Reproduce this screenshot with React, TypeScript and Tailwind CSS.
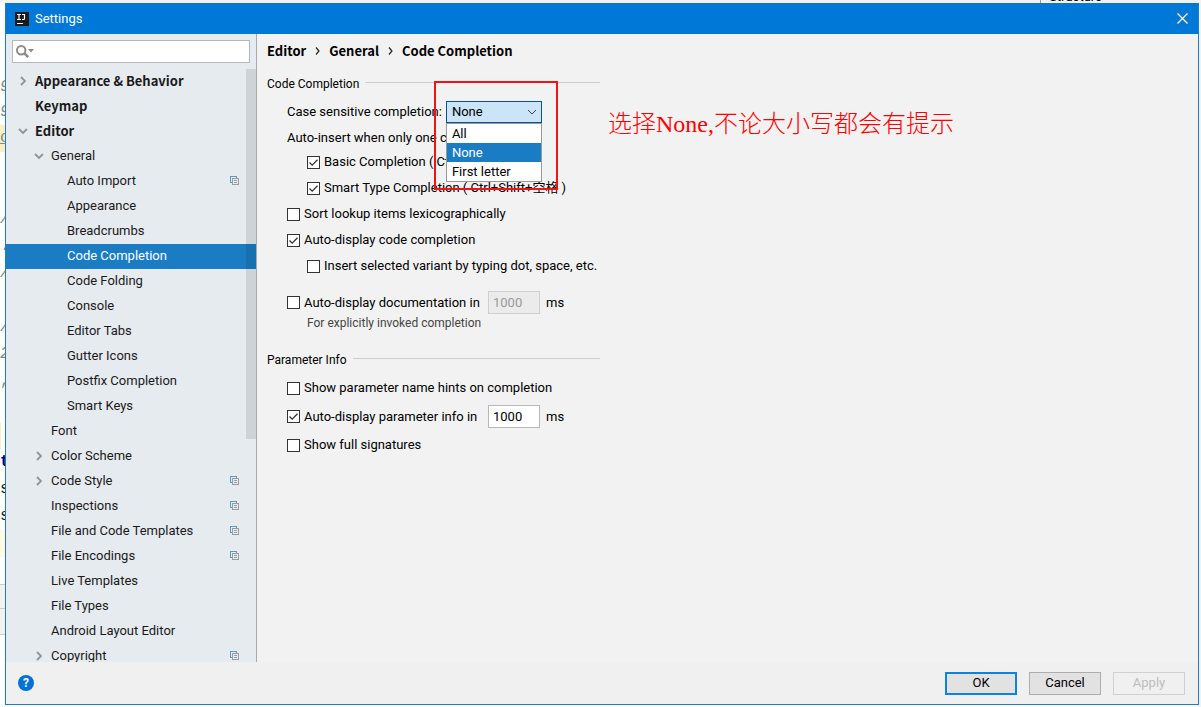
import { useState, type ReactNode } from 'react'

interface TreeItem {
  label: string
  level: 0 | 1 | 2
  state?: 'open' | 'closed'
  project?: boolean
}

const tree: TreeItem[] = [
  { label: 'Appearance & Behavior', level: 0, state: 'closed' },
  { label: 'Keymap', level: 0 },
  { label: 'Editor', level: 0, state: 'open' },
  { label: 'General', level: 1, state: 'open' },
  { label: 'Auto Import', level: 2, project: true },
  { label: 'Appearance', level: 2 },
  { label: 'Breadcrumbs', level: 2 },
  { label: 'Code Completion', level: 2 },
  { label: 'Code Folding', level: 2 },
  { label: 'Console', level: 2 },
  { label: 'Editor Tabs', level: 2 },
  { label: 'Gutter Icons', level: 2 },
  { label: 'Postfix Completion', level: 2 },
  { label: 'Smart Keys', level: 2 },
  { label: 'Font', level: 1 },
  { label: 'Color Scheme', level: 1, state: 'closed' },
  { label: 'Code Style', level: 1, state: 'closed', project: true },
  { label: 'Inspections', level: 1, project: true },
  { label: 'File and Code Templates', level: 1, project: true },
  { label: 'File Encodings', level: 1, project: true },
  { label: 'Live Templates', level: 1 },
  { label: 'File Types', level: 1 },
  { label: 'Android Layout Editor', level: 1 },
  { label: 'Copyright', level: 1, state: 'closed', project: true },
]

const indent = ['pl-3', 'pl-7', 'pl-11']

const caseOptions = ['All', 'None', 'First letter']

function Chevron({ open }: { open: boolean }) {
  return (
    <svg viewBox="0 0 10 10" className="h-2.5 w-2.5" fill="none" stroke="#8f9499" strokeWidth="1.8">
      <path d={open ? 'M1 3l4 4 4-4' : 'M3 1l4 4-4 4'} />
    </svg>
  )
}

function ProjectIcon() {
  return (
    <svg viewBox="0 0 9 9" className="h-[9px] w-[9px]" fill="none" shapeRendering="crispEdges">
      <path d="M1.5 6.5h-1v-6h6v1" stroke="#5c9bbd" />
      <path d="M2.5 2.5h6v6h-6zM4 4.5h3M4 6.5h3" stroke="#999da1" />
    </svg>
  )
}

function TreeRow({ item, selected, onSelect }: { item: TreeItem; selected: boolean; onSelect: () => void }) {
  return (
    <li>
      <button
        onClick={onSelect}
        className={`flex h-[25px] w-full items-center pr-[17px] pb-0.5 text-left whitespace-nowrap ${indent[item.level]} ${
          selected ? 'bg-[#1a7dc4] text-white' : 'text-[#1a1a1a]'
        } ${item.level === 0 ? "font-['Noto_Sans_CJK_SC',sans-serif] font-bold" : ''}`}
      >
        <span className="flex w-[17px] shrink-0">
          {item.state && <Chevron open={item.state === 'open'} />}
        </span>
        <span className="flex-1">{item.label}</span>
        {item.project && <ProjectIcon />}
      </button>
    </li>
  )
}

function Check({ label, defaultChecked = false }: { label: ReactNode; defaultChecked?: boolean }) {
  return (
    <label className="flex items-center gap-1 whitespace-nowrap">
      <span className="grid h-[13px] w-[13px] shrink-0">
        <input
          type="checkbox"
          defaultChecked={defaultChecked}
          className="peer col-start-1 row-start-1 h-[13px] w-[13px] appearance-none border border-[#333] bg-white"
        />
        <svg
          viewBox="0 0 13 13"
          className="pointer-events-none invisible col-start-1 row-start-1 h-[13px] w-[13px] peer-checked:visible"
          fill="none"
          stroke="#333"
          strokeWidth="1.3"
        >
          <path d="M2.5 6.5l2.7 2.7 5.3-5.4" />
        </svg>
      </span>
      {label}
    </label>
  )
}

function GroupTitle({ children }: { children: ReactNode }) {
  return (
    <div className="flex h-4 items-center gap-1.5 text-xs">
      <h2 className="whitespace-nowrap">{children}</h2>
      <div className="mb-1 h-px flex-1 bg-[#cdcdcd]" />
    </div>
  )
}

// check box followed by a delay field; the fields of all rows line up
function DelayRow({ label, checked, disabled }: { label: string; checked?: boolean; disabled?: boolean }) {
  return (
    <div className="flex items-center gap-1.5">
      <div className="w-[195px]">
        <Check label={label} defaultChecked={checked} />
      </div>
      <input
        aria-label={`${label} (ms)`}
        defaultValue="1000"
        disabled={disabled}
        className="h-[23px] w-[52px] border border-[#b8b8b8] bg-white px-1 disabled:border-[#cfcfcf] disabled:bg-[#ebebeb] disabled:text-[#999]"
      />
      <span>ms</span>
    </div>
  )
}

function CrumbArrow() {
  return (
    <svg viewBox="0 0 5 8" className="h-2 w-[5px]" fill="none" stroke="#222" strokeWidth="1.2">
      <path d="M1 .5L4 4 1 7.5" />
    </svg>
  )
}

function CaseSelect() {
  const [value, setValue] = useState('None')
  const [open, setOpen] = useState(true)

  return (
    <div className="relative w-24">
      <button
        id="case-sensitive"
        aria-haspopup="listbox"
        aria-expanded={open}
        onClick={() => setOpen(!open)}
        className="flex h-[22px] w-full items-center justify-between border border-[#00559b] bg-[#cce4f7] pr-1 pl-[5px]"
      >
        {value}
        <svg viewBox="0 0 10 10" className="h-2.5 w-2.5" fill="none" stroke="#444">
          <path d="M1 3l4 4 4-4" />
        </svg>
      </button>
      {open && (
        <ul role="listbox" className="absolute top-[22px] left-0 z-10 w-full border border-[#999] bg-white">
          {caseOptions.map((o) => (
            <li
              key={o}
              role="option"
              aria-selected={o === value}
              onClick={() => {
                setValue(o)
                setOpen(false)
              }}
              className={`h-[19px] px-[5px] leading-[19px] ${o === value ? 'bg-[#1a7dc4] text-white' : ''}`}
            >
              {o}
            </li>
          ))}
        </ul>
      )}
      {/* red marker around the drop-down */}
      <div className="pointer-events-none absolute -top-5 -left-3 z-20 h-[109px] w-[124px] border-2 border-[#f01414]" />
    </div>
  )
}

function EditorGutter() {
  return (
    <div className="w-[5px] shrink-0 overflow-hidden bg-white font-['Liberation_Mono'] text-base leading-[27px] text-[#888]">
      <div className="mt-[72px] leading-[25px] italic">9</div>
      <div className="leading-[25px] italic">9</div>
      <div className="h-[27px] bg-[#f9efc5] underline">o</div>
      <div className="mt-[54px] italic">/</div>
      <div>.</div>
      <div className="italic">/</div>
      <div className="mt-[27px] italic">/</div>
      <div className="italic">2</div>
      <div>,</div>
      <div className="mt-[27px] h-[27px] w-px bg-[#f9efc5]" />
      <div className="font-bold text-[#000080]">t</div>
      <div className="text-[#222]">s</div>
      <div className="text-[#222]">s</div>
      <div className="h-[27px] bg-[#fffae3]" />
      <div className="mt-[27px] h-[25px] border-y border-[#ccc] bg-[#f2f2f2]" />
      <div className="h-[26px] border-b border-[#ccc] bg-[#f2f2f2]" />
    </div>
  )
}

export default function App() {
  const [selected, setSelected] = useState('Code Completion')

  return (
    <div className="flex h-screen flex-col overflow-hidden bg-white font-['Roboto','Noto_Sans_CJK_SC',sans-serif] text-[13px] leading-5 text-black">
      {/* toolbar of the window behind */}
      <div className="flex h-[3px] shrink-0 items-end justify-end overflow-hidden bg-[#f2f2f2] pr-[99px] leading-3">
        <span className="border-l border-[#999] pl-2">Structure</span>
      </div>

      <div className="flex min-h-0 flex-1">
        <EditorGutter />

        <main className="mb-0.5 flex min-w-0 flex-1 flex-col border border-t-0 border-[#1a7dc9] bg-[#f2f2f2]">
          <header className="flex h-[31px] shrink-0 items-center bg-[#0078d7] pr-2.5 pl-[9px] text-white">
            <svg viewBox="0 0 14 14" className="h-3.5 w-3.5" fill="none">
              <rect width="14" height="14" fill="#1b1b1b" />
              <path d="M2 2.5h4M4 2.5v5M2 7.5h4M7 2.5h3M9.5 2.5v4q0 1-1 1H7M2 11.5h6" stroke="#fff" strokeWidth="1.2" />
            </svg>
            <h1 className="ml-1.5 flex-1">Settings</h1>
            <button aria-label="Close">
              <svg viewBox="0 0 11 11" className="h-[11px] w-[11px]" stroke="#fff" strokeWidth="1.2">
                <path d="M.5.5l10 10M10.5.5l-10 10" />
              </svg>
            </button>
          </header>

          <div className="flex min-h-0 flex-1">
            <aside className="flex w-[251px] shrink-0 flex-col border-r border-[#a9a9a9] bg-[#e6ebf0]">
              <label className="mx-1.5 mt-1.5 flex h-[23px] shrink-0 items-center border border-[#b8b8b8] bg-white pl-[3px]">
                <svg viewBox="0 0 18 13" className="h-[13px] w-[18px] shrink-0" fill="none">
                  <circle cx="5.2" cy="5.2" r="4.2" stroke="#8a8a8a" strokeWidth="2" />
                  <path d="M8.2 8.2l4 4" stroke="#8a8a8a" strokeWidth="2.4" />
                  <path d="M12 4h6l-3 3.5z" fill="#8a8a8a" />
                </svg>
                <input aria-label="Search settings" className="min-w-0 flex-1 outline-none" />
              </label>
              <div className="relative mt-1.5 min-h-0 flex-1 overflow-hidden">
                <ul>
                  {tree.map((item) => (
                    <TreeRow
                      key={item.label}
                      item={item}
                      selected={item.label === selected}
                      onSelect={() => setSelected(item.label)}
                    />
                  ))}
                </ul>
                <div className="absolute top-0 right-0 h-[370px] w-2.5 bg-black/10" />
              </div>
            </aside>

            <section className="flex min-w-0 flex-1 items-start pl-2.5">
              <div className="w-[333px] shrink-0">
                <nav className="mt-[7px] flex items-center gap-[9px] font-['Noto_Sans_CJK_SC',sans-serif] font-bold whitespace-nowrap">
                  <a href="#editor">Editor</a>
                  <CrumbArrow />
                  <a href="#general">General</a>
                  <CrumbArrow />
                  <a href="#completion">Code Completion</a>
                </nav>

                <div className="mt-[15px]">
                  <GroupTitle>Code Completion</GroupTitle>
                </div>
                <div className="mt-[9px] flex items-center gap-1 pl-5 whitespace-nowrap">
                  <label htmlFor="case-sensitive">Case sensitive completion:</label>
                  <CaseSelect />
                </div>
                <div className="mt-[5px] pl-5 whitespace-nowrap">Auto-insert when only one choice on:</div>
                <div className="mt-1 flex flex-col gap-1.5 pl-10">
                  <Check label="Basic Completion ( Ctrl+Alt+空格 )" defaultChecked />
                  <Check label="Smart Type Completion ( Ctrl+Shift+空格 )" defaultChecked />
                </div>
                <div className="mt-1.5 flex flex-col gap-1.5 pl-5">
                  <Check label="Sort lookup items lexicographically" />
                  <Check label="Auto-display code completion" defaultChecked />
                  <div className="pl-5">
                    <Check label="Insert selected variant by typing dot, space, etc." />
                  </div>
                </div>
                <div className="mt-[15px] pl-5">
                  <DelayRow label="Auto-display documentation in" disabled />
                </div>
                <p className="mt-px pl-10 text-xs leading-4 text-[#444]">For explicitly invoked completion</p>

                <div className="mt-[21px]">
                  <GroupTitle>Parameter Info</GroupTitle>
                </div>
                <div className="mt-2.5 flex flex-col gap-[7px] pl-5">
                  <Check label="Show parameter name hints on completion" />
                  <DelayRow label="Auto-display parameter info in" checked />
                  <Check label="Show full signatures" />
                </div>
              </div>
              <p className="mt-[74px] ml-2 font-['Liberation_Serif','Noto_Sans_CJK_SC',serif] text-2xl font-light whitespace-nowrap text-[#f00]">
                选择None,不论大小写都会有提示
              </p>
            </section>
          </div>

          <footer className="flex h-[42px] shrink-0 items-center gap-3 bg-[#f0f0f0] pr-[13px] pl-3">
            <button aria-label="Help" className="mr-auto h-4 w-4 rounded-full bg-[#0072d6] text-xs leading-4 font-bold text-white">
              ?
            </button>
            <button className="h-[23px] w-[72px] border-2 border-[#0a84de] bg-[#e2e2e2] leading-4">OK</button>
            <button className="h-[23px] w-[72px] border border-[#adadad] bg-[#e2e2e2] leading-4">Cancel</button>
            <button disabled className="h-[23px] w-[72px] border border-[#d0d0d0] leading-4 text-[#bdbdbd]">
              Apply
            </button>
          </footer>
        </main>

        <div className="w-0.5 shrink-0 bg-[#f2f2f2]" />
      </div>
    </div>
  )
}
